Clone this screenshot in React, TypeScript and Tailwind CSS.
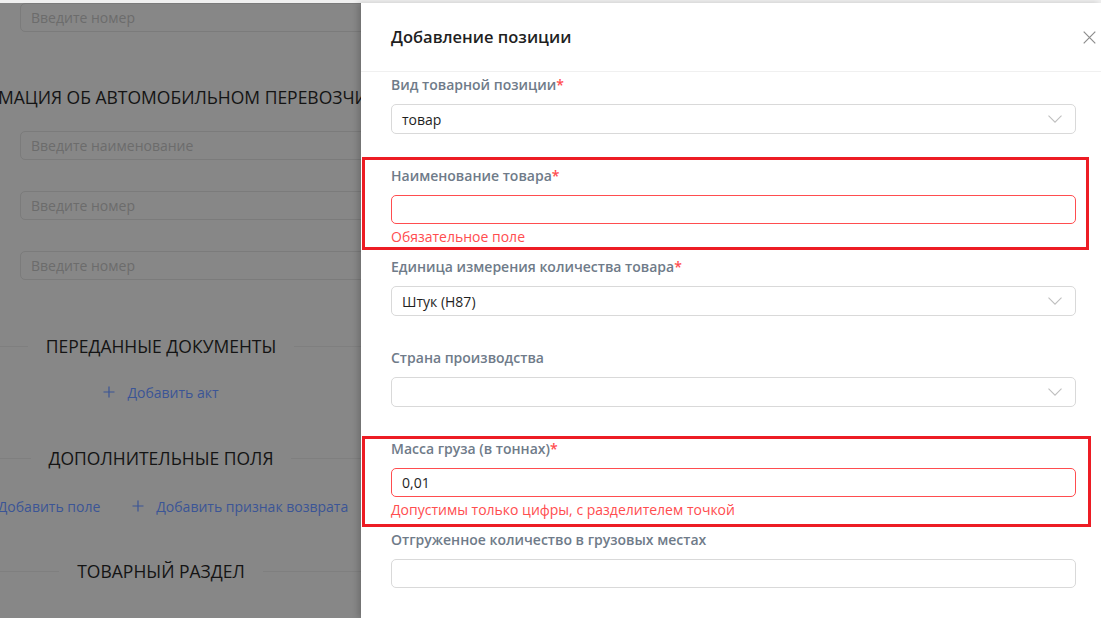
import React from "react";

const Plus = () => (
  <svg width="12" height="12" viewBox="0 0 12 12" className="shrink-0">
    <path d="M6 0.5V11.5M0.5 6H11.5" stroke="currentColor" strokeWidth="1.2" fill="none" />
  </svg>
);

const Chevron = () => (
  <svg width="14" height="8" viewBox="0 0 14 8" className="shrink-0">
    <path d="M0.5 0.7L7 7.2L13.5 0.7" stroke="#bfbfbf" strokeWidth="1.1" fill="none" />
  </svg>
);

const LeftInput = ({ text, className = "" }: { text: string; className?: string }) => (
  <div
    className={
      "self-start ml-[20px] w-[600px] h-[29px] shrink-0 border border-[#7b7b7b] rounded-[5px] pl-[10px] flex items-center text-[14px] text-[#6c6c6c] " +
      className
    }
  >
    {text}
  </div>
);

const Divider = ({ text, className = "" }: { text: string; className?: string }) => (
  <div className={"w-[522px] shrink-0 flex items-center " + className}>
    <div className="flex-1 h-px bg-[#7f7f7f]" />
    <div className="px-[18px] text-[17.5px] leading-[28px] text-[#141414] whitespace-nowrap uppercase">{text}</div>
    <div className="flex-1 h-px bg-[#7f7f7f]" />
  </div>
);

const Label = ({ text, req }: { text: string; req?: boolean }) => (
  <div className="h-[22px] leading-[22px] text-[14px] font-semibold text-[#6f7b89] whitespace-nowrap">
    {text}
    {req && <span className="text-[#ff4d4f]">*</span>}
  </div>
);

const Select = ({ value }: { value?: string }) => (
  <div className="mt-[8px] h-[30px] border border-[#d9d9d9] rounded-[5px] pl-[10px] pr-[13px] flex items-center justify-between text-[14px] text-[#1f1f1f]">
    <span>{value ?? ""}</span>
    <Chevron />
  </div>
);

const TextInput = ({ value, error }: { value?: string; error?: boolean }) => (
  <div
    className={
      "mt-[8px] h-[29px] border rounded-[5px] pl-[10px] flex items-center text-[14px] text-[#1f1f1f] " +
      (error ? "border-[#ff4d4f]" : "border-[#d9d9d9]")
    }
  >
    {value ?? ""}
  </div>
);

const ErrorText = ({ text }: { text: string }) => (
  <div className="mt-[2px] h-[22px] leading-[22px] text-[14px] text-[#ff4d4f] whitespace-nowrap">{text}</div>
);

export default function App() {
  return (
    <div className="w-[1101px] h-[618px] overflow-hidden flex flex-col bg-[#878787] font-['Open_Sans',sans-serif]">
      <div className="h-[3px] shrink-0 bg-[#f0f0f0]" />
      <div className="relative flex-1">
        {/* underlying page (masked) */}
        <div className="w-[322px] flex flex-col items-center">
          <LeftInput text="Введите номер" />
          <div className="mt-[51px] text-[17.5px] leading-[28px] text-[#141414] whitespace-nowrap uppercase">
            Информация об автомобильном перевозчике
          </div>
          <LeftInput text="Введите наименование" className="mt-[20px]" />
          <LeftInput text="Введите номер" className="mt-[31px]" />
          <LeftInput text="Введите номер" className="mt-[31px]" />
          <Divider text="Переданные документы" className="mt-[52px]" />
          <div className="mt-[21px] h-[22px] flex items-center gap-[12px] text-[14px] text-[#3b5596] whitespace-nowrap">
            <Plus />
            <span>Добавить акт</span>
          </div>
          <Divider text="Дополнительные поля" className="mt-[41px]" />
          <div className="mt-[23px] h-[22px] flex items-center gap-[32px] text-[14px] text-[#3b5596] whitespace-nowrap">
            <div className="flex items-center gap-[12px]">
              <Plus />
              <span>Добавить поле</span>
            </div>
            <div className="flex items-center gap-[12px]">
              <Plus />
              <span>Добавить признак возврата</span>
            </div>
          </div>
          <Divider text="Товарный раздел" className="mt-[40px]" />
        </div>

        {/* drawer */}
        <div className="absolute top-0 right-0 bottom-0 w-[740px] bg-white flex flex-col shadow-[-3px_0_6px_rgba(0,0,0,0.18)]">
          <div className="h-[69px] shrink-0 border-b border-[#f0f0f0] pl-[30px] pr-[5px] flex items-center justify-between">
            <div className="text-[16.5px] font-semibold text-[#1f1f1f]">Добавление позиции</div>
            <svg width="13" height="13" viewBox="0 0 13 13">
              <path d="M0.7 0.7L12.3 12.3M12.3 0.7L0.7 12.3" stroke="#8c8c8c" strokeWidth="1.2" fill="none" />
            </svg>
          </div>
          <div className="pt-[2px] pl-[30px] pr-[25px] flex flex-col">
            <div className="h-[91px] flex flex-col">
              <Label text="Вид товарной позиции" req />
              <Select value="товар" />
            </div>
            <div className="h-[91px] flex flex-col">
              <Label text="Наименование товара" req />
              <TextInput error />
              <ErrorText text="Обязательное поле" />
            </div>
            <div className="h-[91px] flex flex-col">
              <Label text="Единица измерения количества товара" req />
              <Select value="Штук (Н87)" />
            </div>
            <div className="h-[91px] flex flex-col">
              <Label text="Страна производства" />
              <Select />
            </div>
            <div className="h-[91px] flex flex-col">
              <Label text="Масса груза (в тоннах)" req />
              <TextInput value="0,01" error />
              <ErrorText text="Допустимы только цифры, с разделителем точкой" />
            </div>
            <div className="h-[91px] flex flex-col">
              <Label text="Отгруженное количество в грузовых местах" />
              <TextInput />
            </div>
          </div>
        </div>

        {/* annotation boxes */}
        <div className="absolute left-[362px] top-[154px] w-[727px] h-[93px] border-[3px] border-[#ed1c24]" />
        <div className="absolute left-[362px] top-[433px] w-[729px] h-[91px] border-[3px] border-[#ed1c24]" />
      </div>
    </div>
  );
}
